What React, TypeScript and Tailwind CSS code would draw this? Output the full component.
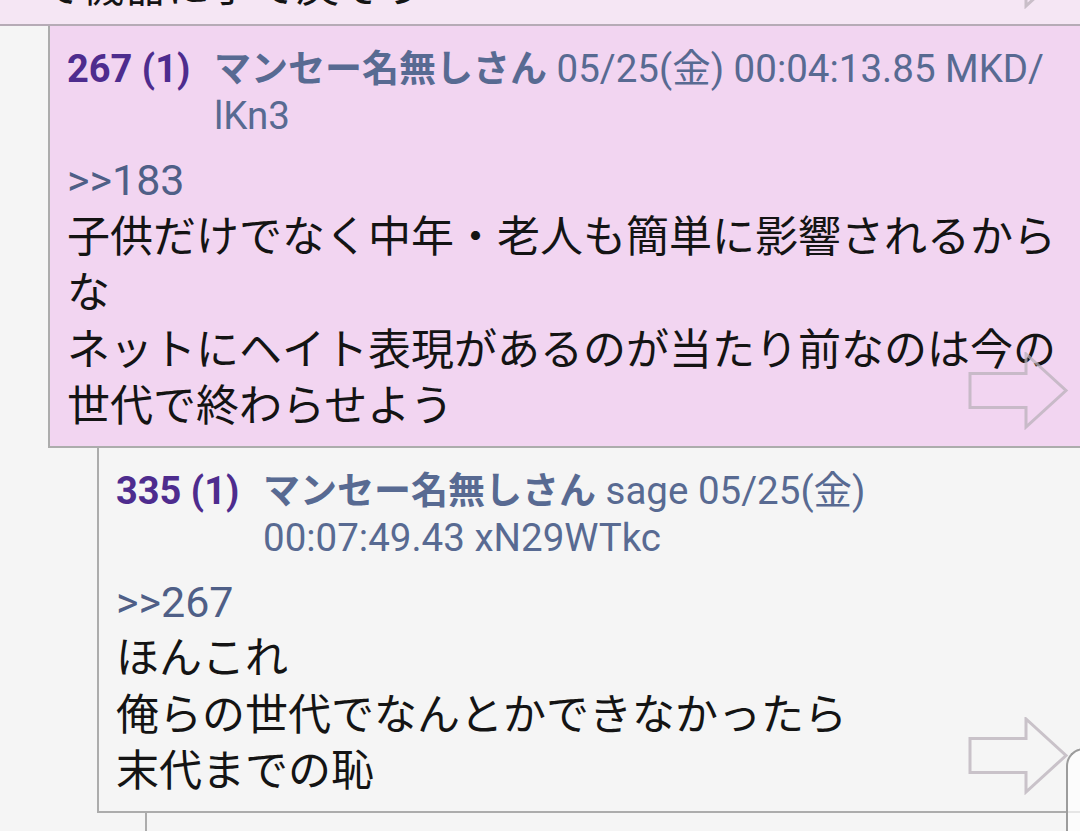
const font = { fontFamily: "Roboto, 'Noto Sans CJK JP', sans-serif" };

type Post = {
  no: string;
  header: string[];
  anchor: string;
  lines: string[];
  indent: string;
  bg: string;
};

const posts: Post[] = [
  {
    no: '267 (1)',
    header: [' 05/25(金) 00:04:13.85 MKD/', 'lKn3'],
    anchor: '>>183',
    lines: ['子供だけでなく中年・老人も簡単に影響されるから', 'な', 'ネットにヘイト表現があるのが当たり前なのは今の', '世代で終わらせよう'],
    indent: 'ml-[48px]',
    bg: 'bg-[#f2d5f1]',
  },
  {
    no: '335 (1)',
    header: [' sage 05/25(金)', '00:07:49.43 xN29WTkc'],
    anchor: '>>267',
    lines: ['ほんこれ', '俺らの世代でなんとかできなかったら', '末代までの恥'],
    indent: 'ml-[97px]',
    bg: 'bg-[#f5f5f5]',
  },
];

const Arrow = ({ className }: { className: string }) => (
  <svg className={className} width="102" height="78" viewBox="0 0 102 78" fill="none">
    <path
      d="M2 21.5H58V2L98 38.5L58 75V55.5H2Z"
      stroke="#b9b0b9"
      strokeOpacity="0.75"
      strokeWidth="3"
      strokeLinejoin="miter"
    />
  </svg>
);

const PostCard = ({ post }: { post: Post }) => (
  <div className={`relative ${post.indent} ${post.bg} border-b-2 border-l-2 border-[#acacac] pb-[11px] pl-[17px] pt-[20px]`}>
    <div className="flex leading-[46px] text-[#586a92]">
      <span className="w-[147px] shrink-0 text-[38px] font-bold text-[#4e2c8e]">{post.no}</span>
      <div className="text-[38.5px]">
        <span className="text-[37px] font-bold">マンセー名無しさん</span>
        {post.header[0]}
        <br />
        {post.header[1]}
      </div>
    </div>
    <div className="mt-[13px] text-[43px] leading-[56.5px] text-[#141414]">
      <div className="text-[#4f5f87]">{post.anchor}</div>
      {post.lines.map((line) => (
        <div key={line} className="whitespace-nowrap">
          {line}
        </div>
      ))}
    </div>
    <Arrow className="absolute bottom-[16px] right-[10px]" />
  </div>
);

export default function App() {
  return (
    <div className="relative h-[831px] w-[1080px] overflow-hidden bg-[#f5f5f5]" style={font}>
      <div className="relative h-[26px] overflow-hidden border-b-2 border-[#b6abb6] bg-[#f5e6f4]">
        <div className="-mt-[41px] pl-[38px] text-[43px] leading-[56.5px] text-[#141414]">で機器に手で戻そう</div>
        <Arrow className="absolute bottom-[15px] right-[10px]" />
      </div>
      {posts.map((post) => (
        <PostCard key={post.no} post={post} />
      ))}
      <div className="ml-[145px] h-[40px] border-l-2 border-[#acacac]" />
      <div className="absolute left-[1066px] top-[748px] h-[100px] w-[40px] rounded-tl-[18px] border-l-2 border-t-2 border-[#9c9c9c] bg-white/70" />
    </div>
  );
}
